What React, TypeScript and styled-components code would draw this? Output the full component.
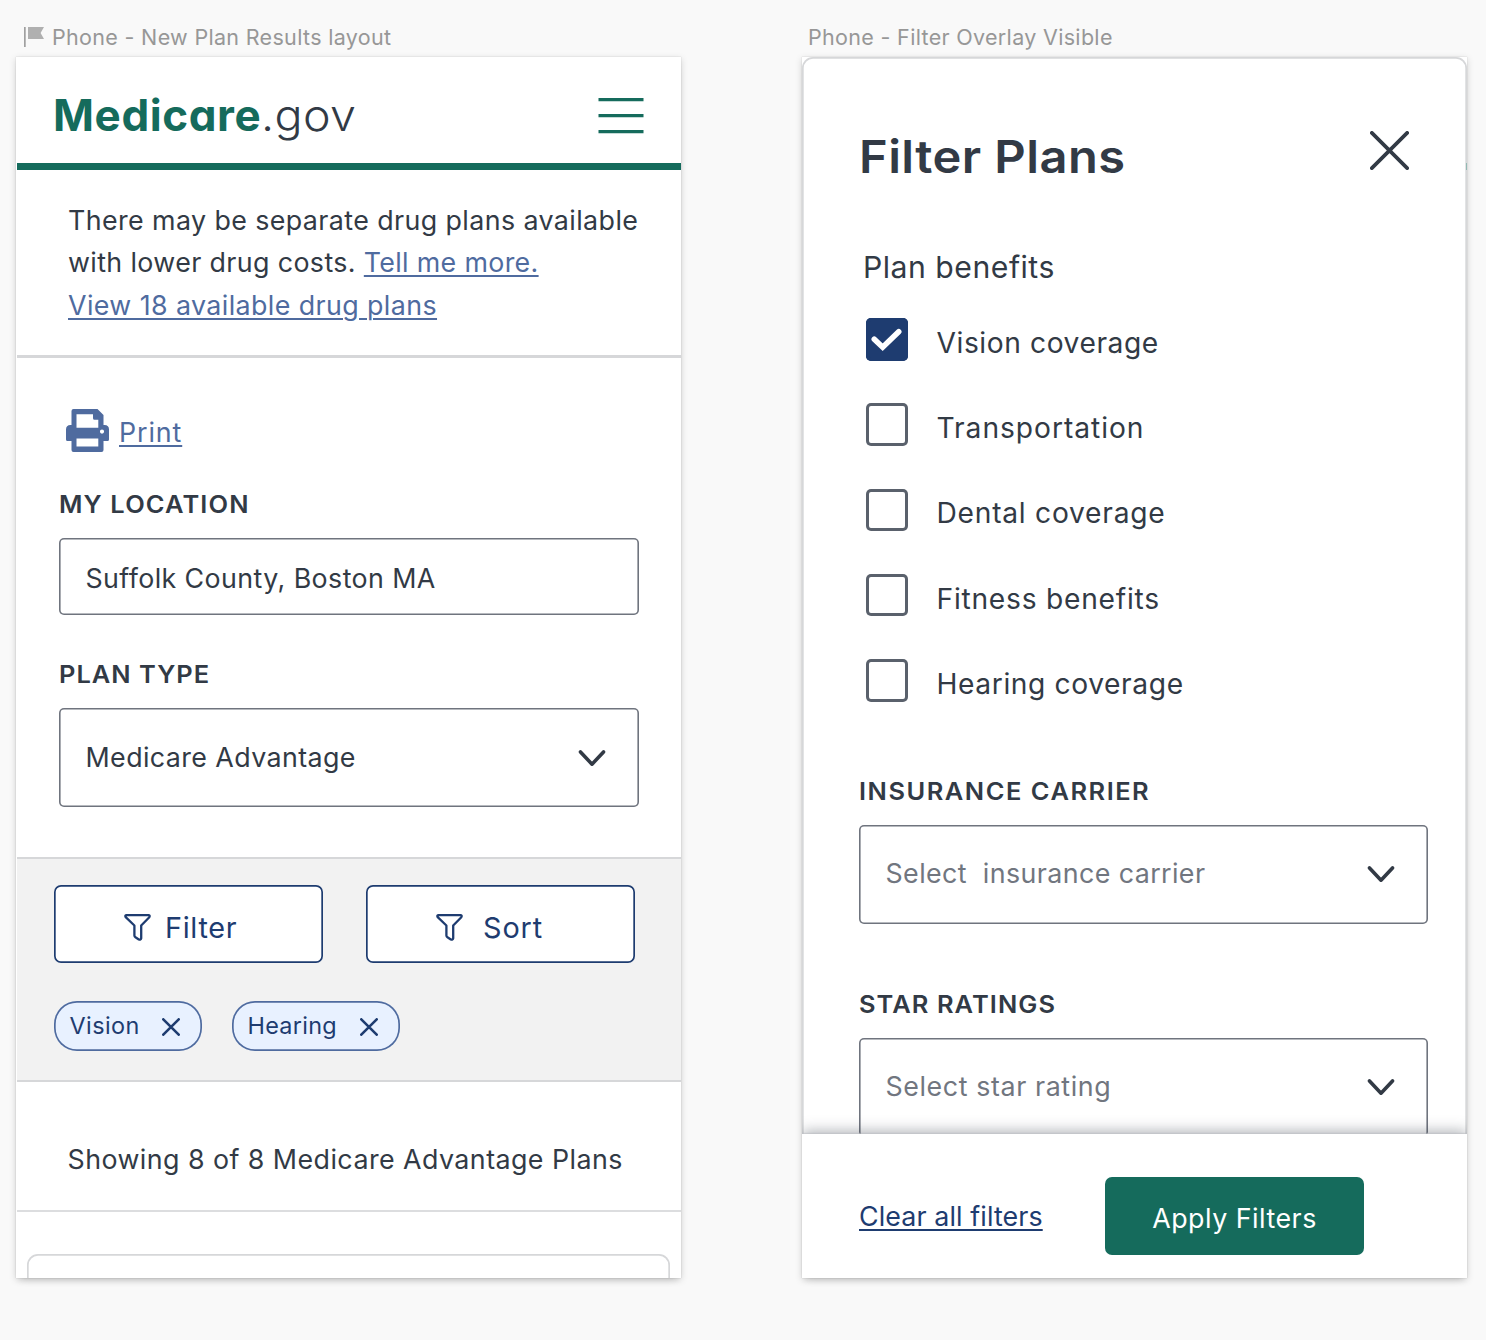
import React from "react";
import styled, { createGlobalStyle, css } from "styled-components";

const color = {
  page: "#f9f9f9",
  ink: "#323a45",
  green: "#156b5c",
  navy: "#1e3c70",
  link: "#4f6b9f",
  line: "#d6d7d9",
  muted: "#71767f",
  box: "#5a616c",
  field: "#6f747e",
  band: "#f2f2f2",
  chip: "#e8f1ff",
};

const Global = createGlobalStyle`
  * { box-sizing: border-box; }
  body {
    margin: 0;
    background: ${color.page};
    color: ${color.ink};
    font-family: Inter, Roboto, "Liberation Sans", sans-serif;
  }
`;

const Canvas = styled.main`
  display: flex;
  gap: 121px;
  width: 1486px;
  height: 1340px;
  padding: 24px 0 0 16px;
  overflow: hidden;
`;

const Artboard = styled.section`
  display: flex;
  flex-direction: column;
  width: 665px;
`;

const Caption = styled.div<{ $indent: number }>`
  display: flex;
  gap: 8px;
  height: 33px;
  padding-left: ${(p) => p.$indent}px;
  font-size: 21.5px;
  line-height: 26px;
  letter-spacing: 0.32px;
  color: #979797;
  svg {
    margin-top: 3px;
  }
`;

const Frame = styled.div`
  box-shadow: 0 2px 7px rgba(0, 0, 0, 0.17), 0 0 1px rgba(0, 0, 0, 0.22),
    0 6px 8px -5px rgba(0, 0, 0, 0.14);
`;

const Screen = styled.div`
  position: relative;
  display: flex;
  flex-direction: column;
  height: 1221px;
  background: #fff;
  overflow: hidden;
  > * {
    flex: none;
  }
`;

const Txt = styled.span<{ $ls?: number; $size?: number }>`
  font-size: ${(p) => p.$size ?? 26.8}px;
  letter-spacing: ${(p) => p.$ls ?? 0.41}px;
  white-space: pre;
`;

const underline = css`
  text-decoration: underline;
  text-decoration-thickness: 2px;
  text-underline-offset: 3px;
`;

const Link = styled(Txt)<{ $dark?: boolean }>`
  color: ${(p) => (p.$dark ? color.navy : color.link)};
  ${underline}
`;

const Header = styled.header`
  display: flex;
  justify-content: space-between;
  height: 113px;
  margin-left: 1px;
  padding: 0 37.5px 0 36px;
  border-bottom: 7px solid ${color.green};
  svg {
    margin-top: 40px;
  }
`;

const Logo = styled.div`
  display: flex;
  align-items: baseline;
  margin-top: 31px;
  font-size: 44px;
  line-height: 54px;
  font-feature-settings: "cv11";
`;

const LogoName = styled.span`
  font-weight: 700;
  color: ${color.green};
  letter-spacing: 0.6px;
`;

const LogoDomain = styled.span`
  font-weight: 300;
  letter-spacing: 0.3px;
  transform: scaleX(1.06);
  transform-origin: left;
`;

const Notice = styled.div`
  height: 188px;
  margin-left: 1px;
  padding: 29px 0 0 51px;
  border-bottom: 3px solid ${color.line};
`;

const NoticeLine = styled.div<{ $height: number }>`
  display: flex;
  height: ${(p) => p.$height}px;
  line-height: 42px;
`;

const LocationForm = styled.div`
  display: flex;
  flex-direction: column;
  height: 499px;
  padding: 51px 42.500px 0 43px;
`;

const PrintRow = styled.div`
  display: flex;
  align-items: center;
  gap: 10px;
  height: 43px;
  padding-left: 7px;
  line-height: 34px;
`;

const PrintText = styled(Link)`
  padding-top: 3px;
`;

const Label = styled.div<{ $top: number; $ls: number }>`
  margin: ${(p) => p.$top + 1}px 0 18px;
  font-size: 24px;
  font-weight: 600;
  line-height: 30px;
  letter-spacing: ${(p) => p.$ls}px;
  white-space: nowrap;
  transform: scaleX(1.06);
  transform-origin: left;
`;

const Field = styled.div<{ $height: number; $muted?: boolean; $drop?: number }>`
  display: flex;
  flex: none;
  align-items: center;
  justify-content: space-between;
  height: ${(p) => p.$height}px;
  padding: ${(p) => p.$drop ?? 0}px 33px 0 26.5px;
  border-radius: 5px;
  box-shadow: inset 0 0 0 1.6px ${color.field};
  color: ${(p) => (p.$muted ? color.muted : color.ink)};
`;

const SelectText = styled(Txt)`
  padding-bottom: 2px;
`;

const FilterBand = styled.div`
  display: flex;
  flex-direction: column;
  gap: 38px;
  height: 225px;
  margin-left: 1px;
  padding: 26px 0 0 37px;
  border-top: 2px solid ${color.line};
  border-bottom: 2px solid ${color.line};
  background: ${color.band};
  color: ${color.navy};
`;

const ButtonRow = styled.div`
  display: flex;
  gap: 43px;
`;

const OutlineButton = styled.div<{ $gap: number }>`
  display: flex;
  align-items: center;
  gap: ${(p) => p.$gap}px;
  width: 269px;
  height: 78px;
  padding: 7px 0 0 70px;
  border-radius: 7px;
  background: #fff;
  box-shadow: inset 0 0 0 1.7px ${color.navy};
`;

const ChipRow = styled.div`
  display: flex;
  gap: 30px;
`;

const Chip = styled.div<{ $width: number }>`
  display: flex;
  align-items: center;
  justify-content: space-between;
  width: ${(p) => p.$width}px;
  height: 50px;
  padding: 0 22px 0 15.500px;
  border-radius: 23px;
  background: ${color.chip};
  box-shadow: inset 0 0 0 1.7px ${color.link};
  svg {
    margin-top: 2px;
  }
  span {
    padding-bottom: 2px;
  }
`;

const ResultCount = styled.div`
  display: flex;
  height: 130px;
  margin-left: 1px;
  padding: 60px 0 0 50.500px;
  border-bottom: 2px solid #dcdddf;
  line-height: 34px;
`;

const PlanCard = styled.div`
  height: 60px;
  margin: 42px 11px 0;
  border-radius: 11px;
  box-shadow: inset 0 0 0 1.7px ${color.line};
`;

const Overlay = styled.div`
  height: 1300px;
  margin-bottom: -223px;
  padding: 73px 39.5px 0 57px;
  border-radius: 11px;
  box-shadow: inset 0 0 0 1.7px ${color.line};
`;

const TitleRow = styled.div`
  display: flex;
  justify-content: space-between;
  height: 54px;
  padding-right: 19px;
  svg {
    margin-top: 1px;
  }
`;

const Title = styled.h1`
  margin: 0;
  font-size: 45px;
  font-weight: 600;
  line-height: 54px;
  letter-spacing: 0.4px;
  transform: scaleX(1.085);
  transform-origin: left;
`;

const GroupTitle = styled.div`
  display: flex;
  margin: 64px 0 32px 4px;
  line-height: 38px;
`;

const CheckList = styled.div`
  display: flex;
  flex-direction: column;
  gap: 42.2px;
  padding-left: 6.5px;
  margin-bottom: -1px;
`;

const CheckRow = styled.div`
  display: flex;
  align-items: center;
  gap: 28.5px;
  height: 43px;
`;

const CheckText = styled(Txt)`
  padding-top: 7px;
`;

const CheckBox = styled.div<{ $on: boolean }>`
  display: flex;
  align-items: center;
  justify-content: center;
  width: 42.5px;
  height: 42.5px;
  border-radius: 5px;
  background: ${(p) => (p.$on ? color.navy : "#fff")};
  box-shadow: inset 0 0 0 3px ${(p) => (p.$on ? color.navy : color.box)};
`;

const Footer = styled.footer`
  position: relative;
  display: flex;
  gap: 62px;
  height: 144px;
  padding: 43px 0 0 57px;
  background: #fff;
  box-shadow: 0 -1px 1px rgba(190, 192, 196, 0.6), 0 -3px 13px rgba(50, 58, 69, 0.38);
`;

const ClearLink = styled(Link)`
  width: 184px;
  line-height: 78px;
`;

const ApplyButton = styled.div`
  display: flex;
  align-items: center;
  justify-content: center;
  width: 259px;
  height: 78px;
  padding-top: 4px;
  border-radius: 7px;
  background: ${color.green};
  color: #fff;
`;

const HeaderPeek = styled.div`
  position: absolute;
  right: 0;
  top: 106px;
  width: 1px;
  height: 7px;
  background: #93b9b3;
`;

const FlagIcon = () => (
  <svg width="20" height="20" viewBox="0 0 20 20">
    <rect x="0" y="0" width="1.7" height="20" fill="#a0a0a0" />
    <path d="M4 0H20L16.6 6L20 12H4Z" fill="#b0b0b0" />
  </svg>
);

const MenuIcon = () => (
  <svg width="46" height="37" viewBox="0 0 46 37" stroke={color.green} strokeWidth="3.4">
    <path d="M0.5 2.6H45.5M0.5 18.6H45.5M0.5 34.6H45.5" />
  </svg>
);

const PrintIcon = () => (
  <svg width="43" height="43" viewBox="0 0 43 43">
    <path
      fillRule="evenodd"
      fill={color.link}
      d="M7.5 0H31.5L37.5 6V16H38.5Q43 16 43 20.5V30.5Q43 32 41.5 32H37.5V41Q37.5 43 35.5 43H7.5Q5.5 43 5.5 41V32H1.5Q0 32 0 30.5V20.5Q0 16 4.5 16H5.5V2Q5.5 0 7.5 0ZM10.5 5.3V18.8H32.3V10.7H28.5Q27 10.7 27 9.2V5.3ZM10.5 29.5V37.5H32.3V29.5ZM36 20.5A2.1 2.1 0 1 0 36 24.7A2.1 2.1 0 1 0 36 20.5Z"
    />
  </svg>
);

const Chevron = () => (
  <svg
    width="28"
    height="18"
    viewBox="0 0 28 18"
    fill="none"
    stroke={color.ink}
    strokeWidth="3.6"
    strokeLinecap="round"
    strokeLinejoin="round"
  >
    <path d="M2.5 2.9L14 15.2L25.5 2.9" />
  </svg>
);

const Funnel = () => (
  <svg
    width="27"
    height="27"
    viewBox="0 0 27 27"
    fill="none"
    stroke={color.navy}
    strokeWidth="2.3"
    strokeLinejoin="round"
  >
    <path d="M2.3 1.2H24.7Q26.3 1.5 25.3 3.2L17.2 11.5V24.2Q16.8 26.2 14.8 25.5L11.5 23.3Q10.4 22.5 10.4 21.5V11.5L1.7 3.2Q0.7 1.5 2.3 1.2Z" />
  </svg>
);

const Cross = ({ size, weight }: { size: number; weight: number }) => {
  const a = weight / 2;
  const b = size - a;
  return (
    <svg width={size} height={size} stroke="currentColor" strokeWidth={weight} strokeLinecap="round">
      <path d={`M${a} ${a}L${b} ${b}M${b} ${a}L${a} ${b}`} />
    </svg>
  );
};

const Check = () => (
  <svg
    width="31"
    height="24"
    viewBox="0 0 31 24"
    fill="none"
    stroke="#fff"
    strokeWidth="5.6"
    strokeLinecap="round"
  >
    <path d="M3.3 11.2L11.7 19.2L27.7 3.8" />
  </svg>
);

const benefits = [
  { name: "Vision coverage", on: true, ls: 0.57 },
  { name: "Transportation", on: false, ls: 0.95 },
  { name: "Dental coverage", on: false, ls: 0.75 },
  { name: "Fitness benefits", on: false, ls: 0.75 },
  { name: "Hearing coverage", on: false, ls: 0.6 },
];

export default function App() {
  return (
    <>
      <Global />
      <Canvas>
        <Artboard>
          <Caption $indent={8}>
            <FlagIcon />
            <span>Phone - New Plan Results layout</span>
          </Caption>
          <Frame>
            <Screen>
              <Header>
                <Logo>
                  <LogoName>Medicare</LogoName>
                  <LogoDomain>.gov</LogoDomain>
                </Logo>
                <MenuIcon />
              </Header>
              <Notice>
                <NoticeLine $height={42}>
                  <Txt>There may be separate drug plans available</Txt>
                </NoticeLine>
                <NoticeLine $height={43}>
                  <Txt $ls={0.38}>with lower drug costs. </Txt>
                  <Link $ls={0.33}>Tell me more.</Link>
                </NoticeLine>
                <NoticeLine $height={42}>
                  <Link>View 18 available drug plans</Link>
                </NoticeLine>
              </Notice>
              <LocationForm>
                <PrintRow>
                  <PrintIcon />
                  <PrintText $ls={0.9}>Print</PrintText>
                </PrintRow>
                <Label $top={37} $ls={1.05}>MY LOCATION</Label>
                <Field $height={77} $drop={3}>
                  <Txt>Suffolk County, Boston MA</Txt>
                </Field>
                <Label $top={44} $ls={0.95}>PLAN TYPE</Label>
                <Field $height={99}>
                  <SelectText>Medicare Advantage</SelectText>
                  <Chevron />
                </Field>
              </LocationForm>
              <FilterBand>
                <ButtonRow>
                  <OutlineButton $gap={14}>
                    <Funnel />
                    <Txt $size={28.8} $ls={0.7}>Filter</Txt>
                  </OutlineButton>
                  <OutlineButton $gap={20}>
                    <Funnel />
                    <Txt $size={28.8} $ls={0.9}>Sort</Txt>
                  </OutlineButton>
                </ButtonRow>
                <ChipRow>
                  <Chip $width={148}>
                    <Txt $size={23.4} $ls={0.45}>Vision</Txt>
                    <Cross size={18} weight={2.6} />
                  </Chip>
                  <Chip $width={168}>
                    <Txt $size={23.4} $ls={0.3}>Hearing</Txt>
                    <Cross size={18} weight={2.6} />
                  </Chip>
                </ChipRow>
              </FilterBand>
              <ResultCount>
                <Txt $ls={0.45}>Showing 8 of 8 Medicare Advantage Plans</Txt>
              </ResultCount>
              <PlanCard />
            </Screen>
          </Frame>
        </Artboard>
        <Artboard>
          <Caption $indent={6}>
            <span>Phone - Filter Overlay Visible</span>
          </Caption>
          <Frame>
            <Screen>
              <Overlay>
                <TitleRow>
                  <Title>Filter Plans</Title>
                  <Cross size={39} weight={3.7} />
                </TitleRow>
                <GroupTitle>
                  <Txt $size={30.2} $ls={0.5}>Plan benefits</Txt>
                </GroupTitle>
                <CheckList>
                  {benefits.map((b) => (
                    <CheckRow key={b.name}>
                      <CheckBox $on={b.on}>{b.on && <Check />}</CheckBox>
                      <CheckText $size={28.2} $ls={b.ls}>{b.name}</CheckText>
                    </CheckRow>
                  ))}
                </CheckList>
                <Label $top={75.2} $ls={1.43}>INSURANCE CARRIER</Label>
                <Field $height={99} $muted>
                  <SelectText>Select  insurance carrier</SelectText>
                  <Chevron />
                </Field>
                <Label $top={65} $ls={1}>STAR RATINGS</Label>
                <Field $height={99} $muted>
                  <SelectText $ls={0.6}>Select star rating</SelectText>
                  <Chevron />
                </Field>
              </Overlay>
              <HeaderPeek />
              <Footer>
                <ClearLink $dark $ls={0.11}>Clear all filters</ClearLink>
                <ApplyButton>
                  <Txt $ls={0.5}>Apply Filters</Txt>
                </ApplyButton>
              </Footer>
            </Screen>
          </Frame>
        </Artboard>
      </Canvas>
    </>
  );
}
